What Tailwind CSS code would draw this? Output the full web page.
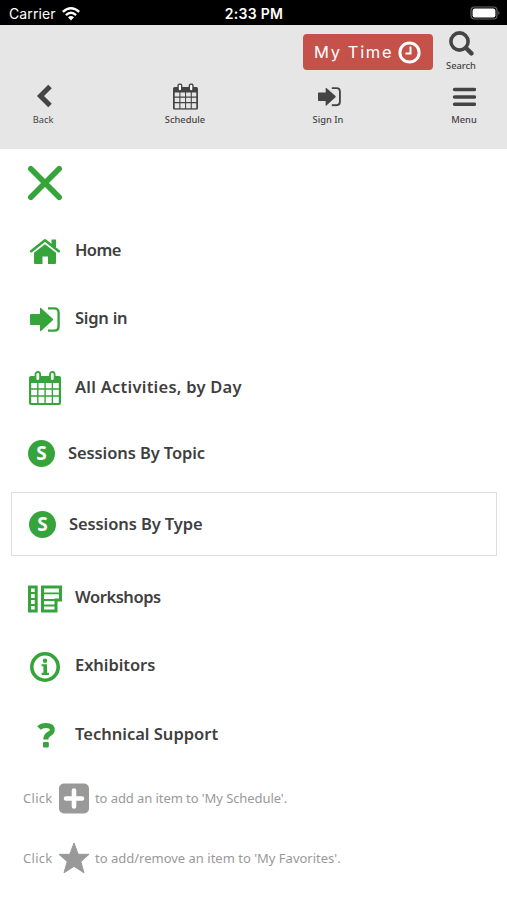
<!DOCTYPE html>
<html lang="en">
<head>
<meta charset="utf-8">
<meta name="viewport" content="width=device-width">
<title>Menu</title>
<script src="https://cdn.jsdelivr.net/npm/@tailwindcss/browser@4"></script>
</head>
<body class="bg-white w-[507px] h-[900px] overflow-hidden font-['Trebuchet_MS','Noto_Sans',sans-serif] text-[#3f3f3f]">
<svg width="0" height="0" class="absolute">
  <defs>
    <symbol id="cal" viewBox="0 0 32 34">
      <path fill="currentColor" fill-rule="evenodd" d="M2 5H30Q32 5 32 7V32Q32 34 30 34H2Q0 34 0 32V7Q0 5 2 5ZM2.2 12V17.2H8.1V12ZM9.5 12V17.2H15.4V12ZM16.8 12V17.2H22.7V12ZM24.1 12V17.2H29.8V12ZM2.2 18.7V24.2H8.1V18.7ZM9.5 18.7V24.2H15.4V18.7ZM16.8 18.7V24.2H22.7V18.7ZM24.1 18.7V24.2H29.8V18.7ZM2.2 25.7V32H8.1V25.7ZM9.5 25.7V32H15.4V25.7ZM16.8 25.7V32H22.7V25.7ZM24.1 25.7V32H29.8V25.7Z"/>
      <rect x="6.5" y="1" width="4.6" height="9" rx="2.3" fill="white" stroke="currentColor" stroke-width="1.8"/>
      <rect x="21" y="1" width="4.6" height="9" rx="2.3" fill="white" stroke="currentColor" stroke-width="1.8"/>
    </symbol>
    <symbol id="signin" viewBox="0 0 30 25">
      <path fill="currentColor" d="M1 7H10V1.4Q10 .2 11 1L22.8 11.7Q23.5 12.5 22.8 13.3L11 24Q10 24.8 10 23.6V18H1Q0 18 0 17V8Q0 7 1 7Z"/>
      <path fill="none" stroke="currentColor" stroke-width="2.4" d="M18 1.4H24.2Q28.6 1.4 28.6 5.8V19.2Q28.6 23.6 24.2 23.6H18"/>
    </symbol>
  </defs>
</svg>

<div class="h-[25px] bg-black text-white grid grid-cols-3 items-center pl-[9px] pr-[6px] pt-[2px] font-['Inter',sans-serif]">
  <div class="flex items-center gap-[6px] text-[14px] leading-none tracking-[0.1px]">Carrier
    <svg class="w-[18px] h-[14px]" viewBox="0 0 18 14"><g fill="none" stroke="white" stroke-width="2.3"><path d="M.8 4.9Q9-2.4 17.2 4.9"/><path d="M3.9 8.1Q9 3.4 14.1 8.1"/></g><path fill="white" d="M6 10.3Q9 7.7 12 10.3L9 13.4Z"/></svg>
  </div>
  <div class="text-center text-[14px] leading-none font-semibold tracking-[0.3px] whitespace-nowrap pr-[2px]">2:33 PM</div>
  <svg class="justify-self-end w-[31px] h-[15px]" viewBox="0 0 31 15"><rect x="1" y="1" width="26" height="12" rx="3.5" fill="none" stroke="#666" stroke-width="1.2"/><rect x="2.6" y="2.6" width="22.8" height="8.8" rx="2.2" fill="white"/><path d="M28.5 5Q30.5 7 28.5 9Z" fill="#777"/></svg>
</div>

<header class="h-[124px] bg-[#e6e6e6] text-[#444]">
  <div class="h-[56px] flex justify-end items-start pt-[6px] pr-[28px]">
    <button class="mt-[3px] w-[130px] h-[36px] rounded-[4px] bg-[#c4524a] text-white flex items-center pl-[11px] gap-[5px] font-['Inter',sans-serif]">
      <span class="text-[16.5px] leading-none tracking-[1.65px] w-[79px] whitespace-nowrap">My Time</span>
      <svg class="w-[23px] h-[23px]" viewBox="0 0 23 23" fill="none" stroke="white"><circle cx="11.5" cy="11.5" r="9.6" stroke-width="3"/><path d="M12.5 5.5V12.5H7.5" stroke-width="2"/></svg>
    </button>
    <div class="ml-[10px] w-[36px] flex flex-col items-center">
      <svg class="w-[25px] h-[25px]" viewBox="0 0 25 25" fill="none" stroke="currentColor"><circle cx="10.5" cy="10.5" r="8.6" stroke-width="3.6"/><path d="M17 17L22.4 22.4" stroke-width="4.4" stroke-linecap="round"/></svg>
      <span class="mt-[4px] text-[9.3px] leading-[12px] font-medium">Search</span>
    </div>
  </div>
  <nav class="flex pl-[24px] text-[9.3px] leading-[12px] font-medium">
    <div class="w-[38px] flex flex-col items-center"><svg class="w-[30px] h-[30px]" viewBox="0 0 30 30"><path d="M22 5.5L12.5 15L22 24.5" fill="none" stroke="currentColor" stroke-width="5"/></svg><span class="mt-[3px] font-normal">Back</span></div>
    <div class="ml-[101px] w-[44px] flex flex-col items-center"><svg class="w-[25px] h-[30px]" viewBox="0 0 25 30"><use href="#cal" width="25" height="26.5" y="2.2"/></svg><span class="mt-[3px]">Schedule</span></div>
    <div class="ml-[102px] w-[38px] flex flex-col items-center"><svg class="w-[25px] h-[30px]" viewBox="0 0 25 30"><use href="#signin" x="2" y="6" width="23" height="19.4"/></svg><span class="mt-[3px] whitespace-nowrap">Sign In</span></div>
    <div class="ml-[98px] w-[38px] flex flex-col items-center"><svg class="w-[24px] h-[30px]" viewBox="0 0 24 30"><path d="M2.6 8.5H22.4M2.6 16H22.4M2.6 23.3H22.4" stroke="currentColor" stroke-width="3.6" stroke-linecap="round"/></svg><span class="mt-[3px]">Menu</span></div>
  </nav>
</header>

<main class="text-[16.5px] font-semibold leading-none">
  <div class="h-[68px] pl-[23px] flex items-center text-[#35a53b]"><svg class="w-[44px] h-[44px]" viewBox="0 0 44 44"><path d="M7.8 7.8L36.2 36.2M36.2 7.8L7.8 36.2" stroke="currentColor" stroke-width="5.6" stroke-linecap="round"/></svg></div>

  <div class="h-[68px] pl-[23px] flex items-center gap-[8px]">
    <svg class="w-[44px] h-[44px] text-[#35a53b]" viewBox="0 0 44 44"><path d="M8.2 22.2L22 11.3L35.8 22.2" fill="none" stroke="currentColor" stroke-width="2.6" stroke-linecap="round" stroke-linejoin="round"/><path fill="currentColor" d="M28.5 10.5H33V19L28.5 15.4ZM22 15.2L33 23.8V34Q33 35 32 35H25V27.5H19.5V35H12Q11 35 11 34V23.8Z"/></svg>
    <span class="tracking-[-0.6px] pb-[2px]">Home</span>
  </div>
  <div class="h-[68px] pl-[23px] flex items-center gap-[8px]">
    <svg class="w-[44px] h-[44px] text-[#35a53b]" viewBox="0 0 44 44"><use href="#signin" x="7" y="10" width="30" height="25"/></svg>
    <span class="tracking-[-0.25px] pb-[1px]">Sign in</span>
  </div>
  <div class="h-[68px] pl-[23px] flex items-center gap-[8px]">
    <svg class="w-[44px] h-[44px] text-[#35a53b]" viewBox="0 0 44 44"><use href="#cal" x="6" y="6" width="32" height="34"/></svg>
    <span class="tracking-[0.25px]">All Activities, by Day</span>
  </div>
  <div class="h-[64px] pl-[28px] flex items-center gap-[13px]">
    <span class="w-[27px] h-[27px] rounded-full bg-[#35a53b] text-white text-[19px] font-bold flex items-center justify-center">S</span>
    <span class="tracking-[-0.1px]">Sessions By Topic</span>
  </div>
  <div class="mt-[7px] mb-[7px] ml-[11px] mr-[10px] h-[64px] pl-[17px] border border-[#dedede] flex items-center gap-[13px]">
    <span class="w-[27px] h-[27px] rounded-full bg-[#35a53b] text-white text-[19px] font-bold flex items-center justify-center">S</span>
    <span class="tracking-[-0.1px]">Sessions By Type</span>
  </div>
  <div class="h-[68px] pl-[23px] flex items-center gap-[8px]">
    <svg class="w-[44px] h-[44px] text-[#35a53b]" viewBox="0 0 44 44" fill="none" stroke="currentColor" stroke-width="3"><path d="M6.5 12H13.2V36H6.5Z"/><path d="M19.5 12H37.5V25H33V36H19.5Z"/><path stroke-width="1.8" d="M6 18H13M6 24H13M6 30H13M19 18.3H37M19 25H33M19 30.5H33"/></svg>
    <span class="tracking-[-0.45px]">Workshops</span>
  </div>
  <div class="h-[69px] pl-[23px] flex items-center gap-[8px]">
    <svg class="w-[44px] h-[44px] text-[#35a53b]" viewBox="0 0 44 44"><circle cx="22" cy="23" r="13.2" fill="none" stroke="currentColor" stroke-width="3.6"/><circle cx="22" cy="16.7" r="2.2" fill="currentColor"/><path fill="currentColor" d="M18.5 20.3H24V28.8H26V31H18.6V28.8H20.4V22.3H18.5Z"/></svg>
    <span class="tracking-[-0.05px]">Exhibitors</span>
  </div>
  <div class="h-[68px] pl-[23px] flex items-center gap-[8px]">
    <svg class="w-[44px] h-[44px] text-[#35a53b]" viewBox="0 0 44 44"><path d="M16 16Q18.4 13.4 23 13.4Q29.3 13.4 29.3 17.8Q29.3 20.2 26.4 21.8Q22.8 23.7 22.8 27.5" fill="none" stroke="currentColor" stroke-width="5"/><rect x="20" y="30" width="5.8" height="5.4" rx=".8" fill="currentColor"/></svg>
    <span>Technical Support</span>
  </div>
</main>

<footer class="text-[13px] leading-none text-[#999] pl-[23px]">
  <div class="h-[60px] flex items-center"><span class="w-[35px] tracking-[0.3px]">Click</span>
    <svg class="w-[32px] h-[32px] mr-[5px]" viewBox="0 0 32 32"><rect x="1" y="1.5" width="30" height="30" rx="5" fill="#999"/><path d="M16 8.5V24.5M8 16.5H24" stroke="white" stroke-width="4.6" stroke-linecap="round"/></svg>
    <span class="tracking-[-0.08px]">to add an item to 'My Schedule'.</span></div>
  <div class="h-[60px] flex items-center"><span class="w-[35px] tracking-[0.3px]">Click</span>
    <svg class="w-[32px] h-[32px] mr-[5px]" viewBox="0 0 32 32"><path fill="#999" stroke="#999" stroke-linejoin="round" d="M16 1L20.2 12.3H31L22.8 19.6L26 30.8L16 24.4L6 30.8L9.2 19.6L1 12.3H11.8Z"/></svg>
    <span>to add/remove an item to 'My Favorites'.</span></div>
</footer>
</body>
</html>
